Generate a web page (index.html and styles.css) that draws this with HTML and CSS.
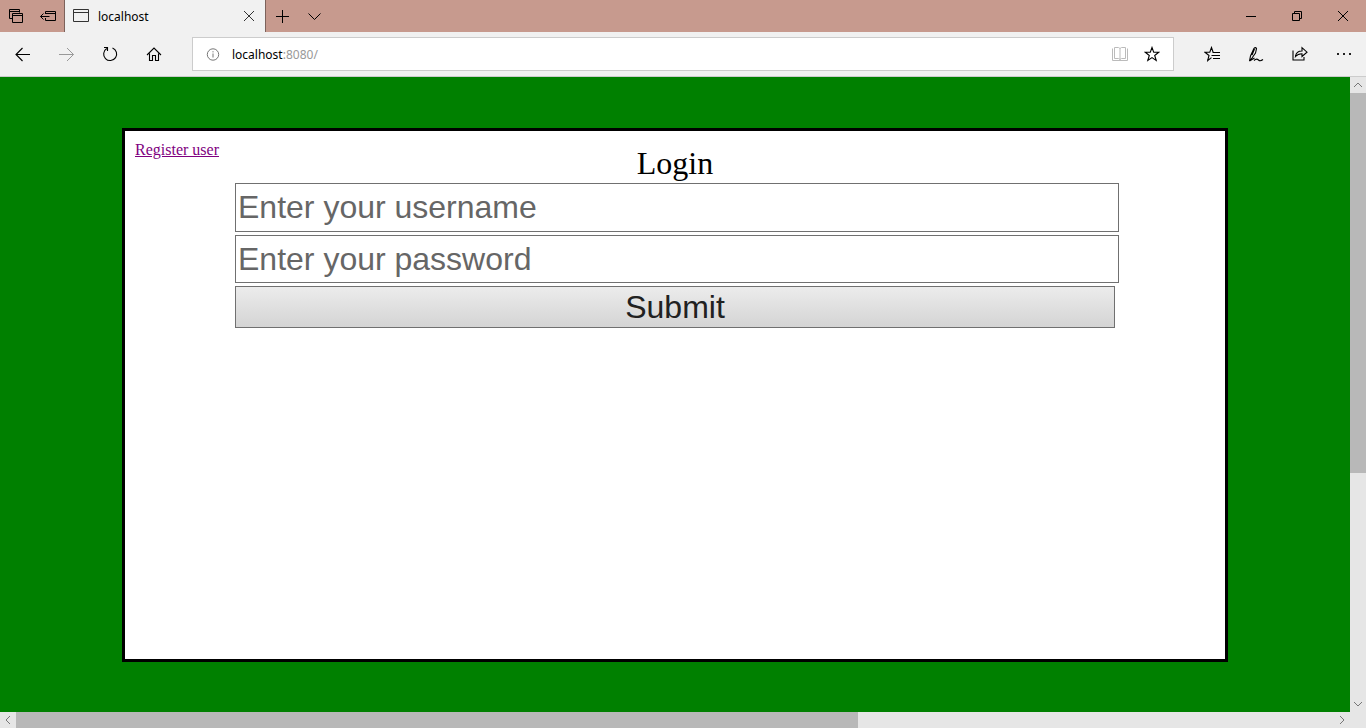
FILE: index.html
```html
<!DOCTYPE html>
<html lang="en">
<head>
<meta charset="utf-8">
<meta name="viewport" content="width=device-width, initial-scale=1">
<title>localhost</title>
<link rel="stylesheet" href="styles.css">
</head>
<body>
<div class="browser">
  <header class="titlebar">
    <div class="tab-tools">
      <button class="icon-btn" aria-label="Tabs you've set aside"><svg width="16" height="16" viewBox="0 0 16 16"><path d="M4.500 10.500h-3v-9h10v3M1.500 3.500h10M4.500 5.500h10v9h-10zM4.500 7.500h10"/></svg></button>
      <button class="icon-btn" aria-label="Set these tabs aside"><svg width="16" height="16" viewBox="0 0 16 16"><path d="M5.500 6V3.500h10v9h-10V10M5.500 5.500h10M.5 8.500h9M3.500 5.500l-3 3 3 3"/></svg></button>
    </div>
    <div class="tab">
      <svg class="tab-icon" width="16" height="14" viewBox="0 0 16 14"><path d="M.5.500h15v12H.5zM.5 3.500h15"/></svg>
      <span class="tab-title">localhost</span>
      <button class="icon-btn tab-close" aria-label="Close tab"><svg width="12" height="12" viewBox="0 0 12 12"><path d="M1 1l10 10M11 1L1 11"/></svg></button>
    </div>
    <div class="tab-actions">
      <button class="icon-btn" aria-label="New tab"><svg width="14" height="14" viewBox="0 0 14 14"><path d="M6.500 1v13M0 7.500h13"/></svg></button>
      <button class="icon-btn" aria-label="Tab previews"><svg width="14" height="14" viewBox="0 0 14 14"><path d="M.5 4.500l6 6 6-6"/></svg></button>
    </div>
    <div class="window-controls">
      <button class="icon-btn" aria-label="Minimize"><svg width="12" height="12" viewBox="0 0 12 12"><path d="M1 6.500h10"/></svg></button>
      <button class="icon-btn" aria-label="Restore"><svg width="12" height="12" viewBox="0 0 12 12"><path d="M1.500 3.500h7v7h-7zM3.500 3V1.500h7v7H9"/></svg></button>
      <button class="icon-btn" aria-label="Close"><svg width="12" height="12" viewBox="0 0 12 12"><path d="M1 1l10 10M11 1L1 11"/></svg></button>
    </div>
  </header>
  <nav class="toolbar">
    <div class="nav-buttons">
      <button class="icon-btn" aria-label="Back"><svg width="16" height="16" viewBox="0 0 16 16"><path class="bold" d="M1.500 8.500H16M8.500 2l-6.500 6.500L8.500 15"/></svg></button>
      <button class="icon-btn faded" aria-label="Forward"><svg width="16" height="16" viewBox="0 0 16 16"><path d="M1 8.500h14.500M9 2l6.500 6.500L9 15"/></svg></button>
      <button class="icon-btn" aria-label="Refresh"><svg width="16" height="16" viewBox="0 0 16 16"><path class="bold" d="M10.500 2A6.500 6.500 0 1 1 4.800 2.500M2 1.500h3.500V5"/></svg></button>
      <button class="icon-btn" aria-label="Home"><svg width="16" height="16" viewBox="0 0 16 16"><path class="bold" d="M1 9l7-7L15 9M3.500 7.500v7h3v-5h3v5h3v-7"/></svg></button>
    </div>
    <div class="address">
      <svg class="info" width="14" height="14" viewBox="0 0 14 14"><circle cx="7" cy="7.500" r="5.700"/><path d="M7 6.500v4M7 4.200v1.200"/></svg>
      <span class="url">localhost<span class="url-rest">:8080/</span></span>
      <button class="icon-btn reading" aria-label="Reading view"><svg width="16" height="16" viewBox="0 0 16 16"><path d="M.5 2.500v12h15v-12M2.500 1.500h4l1.500 1 1.500-1h4v11h-4L8 13.500l-1.500-1h-4zM8 2.500v11"/></svg></button>
      <button class="icon-btn" aria-label="Add to favorites"><svg width="16" height="16" viewBox="0 0 16 16"><path class="bold" d="M8 1.500l1.700 4.800h5l-4 3.200 1.500 5L8 11.600l-4.200 2.900 1.500-5-4-3.200h5z"/></svg></button>
    </div>
    <div class="page-tools">
      <button class="icon-btn" aria-label="Hub"><svg width="16" height="16" viewBox="0 0 16 16"><path class="bold" d="M9.200 6.500L7.500 1.500 5.800 6.300H1l4 3.200-1.300 5 3.800-2.900M8.500 6.500H16M7.500 9.500H16M9 12.500h7"/></svg></button>
      <button class="icon-btn" aria-label="Make a web note"><svg width="16" height="16" viewBox="0 0 16 16"><path class="bold" d="M1.500 15l1-5L6 2.300q1.500-1.500 2.500.2L7.500 7 4 12zM6.500 3L4 9M1.500 15l5-3M6 14.500c2-2 3.500-1.500 4.500-.5s2.500 1 4.500-.500"/></svg></button>
      <button class="icon-btn" aria-label="Share"><svg width="16" height="16" viewBox="0 0 16 16"><path class="bold" d="M1 4.500v9.500h11v-3M3.500 10.500c.5-4 3-5.500 6.500-5.500V1.700L15 6.200l-5 4.300V7.700c-3 0-5 1-6.500 2.800z"/></svg></button>
      <button class="icon-btn" aria-label="More"><svg class="dots" width="16" height="16" viewBox="0 0 16 16"><path d="M1 7h2v2H1zM7 7h2v2H7zM13 7h2v2h-2z"/></svg></button>
    </div>
  </nav>
  <div class="viewport">
    <main class="page">
      <section class="card">
        <div class="card-head">
          <a class="register" href="#register">Register user</a>
          <span class="heading">Login</span>
        </div>
        <form class="login">
          <input class="field username" type="text" placeholder="Enter your username" aria-label="Username">
          <input class="field" type="password" placeholder="Enter your password" aria-label="Password">
          <button class="submit" type="submit">Submit</button>
        </form>
      </section>
    </main>
    <div class="scrollbar vertical">
      <svg width="16" height="16" viewBox="0 0 16 16"><path d="M4 10l4-4 4 4"/></svg>
      <div class="track"><div class="thumb"></div></div>
      <svg width="16" height="16" viewBox="0 0 16 16"><path d="M4 6l4 4 4-4"/></svg>
    </div>
    <div class="scrollbar horizontal">
      <svg width="16" height="16" viewBox="0 0 16 16"><path d="M10 4L6 8l4 4"/></svg>
      <div class="track"><div class="thumb"></div></div>
      <svg width="16" height="16" viewBox="0 0 16 16"><path d="M6 4l4 4-4 4"/></svg>
    </div>
  </div>
</div>
</body>
</html>
```
FILE: styles.css
```css
* {
  box-sizing: border-box;
}

body {
  margin: 0;
  font-family: "Liberation Serif", "Times New Roman", serif;
}

svg {
  display: block;
  flex: none;
  fill: none;
  stroke: currentColor;
  stroke-width: 1;
}

.bold {
  stroke-width: 1.1;
}

.browser {
  display: flex;
  flex-direction: column;
  height: 100vh;
  overflow: hidden;
  color: #000;
}

.icon-btn {
  display: flex;
  align-items: center;
  justify-content: center;
  padding: 0;
  border: 0;
  background: none;
  color: inherit;
}

/* Title bar */
.titlebar {
  display: flex;
  flex: none;
  height: 32px;
  background: #c79a8e;
  font: 12px/16px "Noto Sans", "Open Sans", sans-serif;
}

.tab-tools {
  display: flex;
  align-items: center;
  gap: 16px;
  padding: 0 8px;
}

.tab {
  display: flex;
  align-items: center;
  width: 202px;
  padding: 0 10px 0 8px;
  border: solid #7d625b;
  border-width: 0 1px;
  background: #f1f1f1;
}

.tab-icon {
  color: #333;
}

.tab-title {
  flex: 1;
  padding: 2px 0 0 9px;
}

.tab-close {
  color: #333;
}

.tab-actions {
  display: flex;
  flex: 1;
  gap: 18px;
  padding-left: 10px;
}

.window-controls {
  display: flex;
}

.window-controls .icon-btn {
  width: 46px;
}

/* Toolbar */
.toolbar {
  display: flex;
  flex: none;
  align-items: center;
  height: 45px;
  border-bottom: 1px solid #ccc;
  background: #f1f1f1;
  font: 12px/16px "Noto Sans", "Open Sans", sans-serif;
}

.nav-buttons {
  display: flex;
  width: 192px;
  gap: 28px;
  padding-left: 14px;
}

.faded {
  color: #999;
}

.address {
  display: flex;
  flex: 1;
  align-items: center;
  gap: 16px;
  height: 34px;
  padding: 0 13px;
  border: 1px solid #ccc;
  background: #fff;
}

.info {
  color: #777;
}

.url {
  flex: 1;
  margin-left: -4px;
  padding-top: 2px;
}

.url-rest {
  color: #999;
}

.reading {
  color: #bbb;
}

.page-tools {
  display: flex;
  width: 192px;
  justify-content: space-between;
  padding: 0 14px 0 30px;
}

.dots {
  fill: #222;
  stroke: none;
}

/* Page area */
.viewport {
  display: grid;
  flex: 1;
  grid-template: minmax(0, 1fr) 16px / minmax(0, 1fr) 16px;
  min-height: 0;
  background: #e6e6e6;
}

.page {
  display: flex;
  padding: 51px 122px 50px;
  background: #008000;
}

.card {
  flex: 1;
  border: 3px solid #000;
  background: #fff;
}

.card-head {
  display: grid;
  grid-template-columns: 1fr auto 1fr;
  height: 52px;
  padding: 10px 10px 0;
}

.register {
  justify-self: start;
  align-self: start;
  color: #800080;
  font-size: 16px;
  line-height: 18px;
}

.heading {
  font-size: 32px;
  line-height: 44px;
}

.login {
  display: flex;
  flex-direction: column;
  gap: 3px;
  width: 80%;
  margin: 0 auto;
}

.field,
.submit {
  border: 1px solid #707070;
  border-radius: 0;
  font: 32px/36px "Liberation Sans", Arial, sans-serif;
}

.field {
  width: calc(100% + 4px);
  height: 48px;
  padding: 0 2px;
  background: #fff;
  color: #000;
}

.username {
  height: 49px;
}

.field::placeholder {
  color: #666;
  opacity: 1;
}

.submit {
  height: 42px;
  padding: 0;
  background: linear-gradient(#ececec, #d4d4d4);
  color: #212121;
}

/* Scrollbars */
.scrollbar {
  display: flex;
  background: #e6e6e6;
  color: #777;
}

.vertical {
  flex-direction: column;
}

.track {
  flex: 1;
}

.thumb {
  background: #b8b8b8;
}

.vertical .thumb {
  width: 100%;
  height: 63%;
}

.horizontal .thumb {
  width: 63.9%;
  height: 100%;
}
```
